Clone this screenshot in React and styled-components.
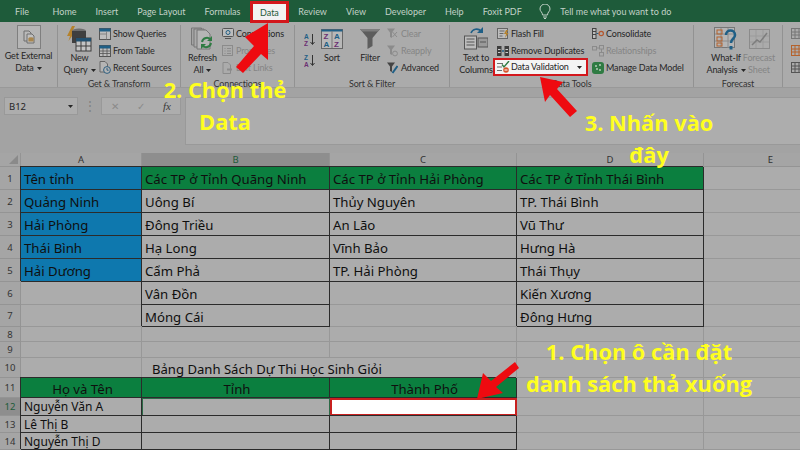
import styled, { createGlobalStyle } from 'styled-components';

const GlobalStyle = createGlobalStyle`
  html, body {
    margin: 0;
    padding: 0;
    background: #acacac;
  }
  * {
    box-sizing: border-box;
  }
`;

const tabs = ['File', 'Home', 'Insert', 'Page Layout', 'Formulas', 'Data', 'Review', 'View', 'Developer', 'Help', 'Foxit PDF'];

const blue = (t) => ({ t, kind: 'blue' });
const green = (t) => ({ t, kind: 'green' });
const box = (t) => ({ t, kind: 'box' });
const plain = (t) => ({ t, kind: 'plain' });

const rows = [
  { no: 1, size: 13.2, cells: [blue('Tên tỉnh'), green('Các TP ở Tỉnh Quãng Ninh'), green('Các TP ở Tỉnh Hải Phòng'), green('Các TP ở Tỉnh Thái Bình'), plain()] },
  { no: 2, size: 13.2, cells: [blue('Quảng Ninh'), box('Uông Bí'), box('Thủy Nguyên'), box('TP. Thái Bình'), plain()] },
  { no: 3, size: 13.2, cells: [blue('Hải Phòng'), box('Đông Triều'), box('An Lão'), box('Vũ Thư'), plain()] },
  { no: 4, size: 13.2, cells: [blue('Thái Bình'), box('Hạ Long'), box('Vĩnh Bảo'), box('Hưng Hà'), plain()] },
  { no: 5, size: 13.2, cells: [blue('Hải Dương'), box('Cẩm Phả'), box('TP. Hải Phòng'), box('Thái Thụy'), plain()] },
  { no: 6, size: 13.2, cells: [plain(), box('Vân Đồn'), plain(), box('Kiến Xương'), plain()] },
  { no: 7, size: 13.2, cells: [plain(), box('Móng Cái'), plain(), box('Đông Hưng'), plain()] },
  { no: 8, size: 11, cells: [plain(), plain(), plain(), plain(), plain()] },
  { no: 9, size: 11, cells: [plain(), plain(), plain(), plain(), plain()] },
  { no: 10, size: 13.1, cells: [plain(), { t: 'Bảng Danh Sách Dự Thi Học Sinh Giỏi', kind: 'title' }, plain(), plain(), plain()] },
  { no: 11, size: 13.2, cells: [{ t: 'Họ và Tên', kind: 'head' }, { t: 'Tỉnh', kind: 'head' }, { t: 'Thành Phố', kind: 'head' }, plain(), plain()] },
  { no: 12, size: 12, active: true, cells: [box('Nguyễn Văn A'), { kind: 'current' }, { kind: 'selected' }, plain(), plain()] },
  { no: 13, size: 12, cells: [box('Lê Thị B'), box(), box(), plain(), plain()] },
  { no: 14, size: 12, cells: [box('Nguyễn Thị D'), box(), box(), plain(), plain()] },
];

function Caret() {
  return <CaretMark viewBox="0 0 5 3"><path d="M0 0h5L2.5 3z" fill="currentColor" /></CaretMark>;
}

function GetDataIcon() {
  return (
    <Icon $w={12} $h={14} viewBox="0 0 12 14">
      <path d="M1 1h5l2 2v8H1z" fill="#b9b9b9" stroke="#6f6f6f" />
      <path d="M4 4h5l2 2v7H4z" fill="#c0c0c0" stroke="#6f6f6f" />
      <ellipse cx="8" cy="8.5" rx="2.6" ry="1.2" fill="#a8864e" />
      <rect x="5.4" y="8.5" width="5.2" height="3" fill="#a8864e" />
    </Icon>
  );
}

function NewQueryIcon() {
  return (
    <Icon $w={25} $h={26} viewBox="0 0 25 26">
      <path d="M5 0 0 10h3L1.5 15 8 6H5l3-6z" fill="#b5822c" />
      <ellipse cx="12" cy="5" rx="7" ry="2.5" fill="#6e6e6e" />
      <path d="M5 5v12h14V5" fill="#3f3f3f" />
      <rect x="9" y="12" width="15" height="13" fill="#c4c4c4" stroke="#3d3d3d" />
      <rect x="9" y="12" width="15" height="3.5" fill="#22506f" />
      <path d="M14 15v10M19 15v10M9 20h15" stroke="#3d3d3d" />
    </Icon>
  );
}

function TableIcon({ dense }) {
  return (
    <Icon $w={12} $h={12} viewBox="0 0 12 12">
      <rect x=".5" y=".5" width="11" height="11" fill="#bdbdbd" stroke="#555" />
      <rect x=".5" y=".5" width="11" height="3" fill="#1f5f86" />
      {dense
        ? <path d="M4 3v8M8 3v8M1 6h10M1 8.5h10" stroke="#555" strokeWidth=".8" />
        : <path d="M7.5 3.5v8M1 6h6.5" stroke="#777" strokeWidth=".8" />}
    </Icon>
  );
}

function RecentIcon() {
  return (
    <Icon $w={12} $h={13} viewBox="0 0 12 13">
      <path d="M1 .5h5l2.5 2.5v8H1z" fill="#b5b5b5" stroke="#666" />
      <circle cx="8" cy="9" r="3.4" fill="#b5b5b5" stroke="#2e5f80" />
      <path d="M8 7v2.2h1.6" stroke="#2e5f80" fill="none" />
    </Icon>
  );
}

function RefreshIcon() {
  return (
    <Icon $w={23} $h={24} viewBox="0 0 23 24">
      <path d="M0.5 1h10v17h-10z" fill="#a4a4a4" stroke="#777" />
      <path d="M3 2h10v18H3z" fill="#ababab" stroke="#777" />
      <path d="M6 3h9l4 4v15H6z" fill="#b5b5b5" stroke="#777" />
      <path d="M11 15a5 5 0 0 1 9-2M20 16a5 5 0 0 1-9 2" fill="none" stroke="#2f7b43" strokeWidth="2" />
      <path d="M21 9v5h-5zM10 22v-5h5z" fill="#2f7b43" />
    </Icon>
  );
}

function ConnectionsIcon() {
  return (
    <Icon $w={12} $h={11} viewBox="0 0 12 11">
      <rect x=".5" y=".5" width="11" height="8" rx="1" fill="#bcbcbc" stroke="#555" />
      <circle cx="6" cy="4.5" r="2" fill="none" stroke="#1f5f86" />
      <path d="M3 10.5h6" stroke="#555" />
    </Icon>
  );
}

function PropertiesIcon() {
  return (
    <Icon $w={11} $h={11} viewBox="0 0 11 11">
      <rect x=".5" y=".5" width="10" height="10" fill="none" stroke="#8b8b8b" />
      <path d="M2.5 3.5h1M5 3.5h4M2.5 6h1M5 6h4M2.5 8.5h1M5 8.5h4" stroke="#8b8b8b" />
    </Icon>
  );
}

function EditLinksIcon() {
  return (
    <Icon $w={11} $h={12} viewBox="0 0 11 12">
      <path d="M1 .5h5l2.5 2.5v8.5H1z" fill="none" stroke="#8b8b8b" />
      <path d="M5 7.5h5" stroke="#8b8b8b" strokeWidth="2" />
    </Icon>
  );
}

function SortSmallIcon({ top, bottom }) {
  return (
    <Icon $w={11} $h={13} viewBox="0 0 11 13">
      <SortLetter x="0" y="6" fill="#1f5f86">{top}</SortLetter>
      <SortLetter x="0" y="12.5" fill="#6b2f72">{bottom}</SortLetter>
      <path d="M8.5 1v10M6.5 9l2 2.5 2-2.5" fill="none" stroke="#333" />
    </Icon>
  );
}

function SortIcon() {
  return (
    <Icon $w={22} $h={20} viewBox="0 0 22 20">
      <rect x=".5" y=".5" width="21" height="19" fill="#b8b8b8" stroke="#666" />
      <rect x=".5" y=".5" width="21" height="2" fill="#1f5f86" />
      <path d="M11 2v17" stroke="#777" />
      <BigLetter x="2.5" y="10" fill="#6b2f72">Z</BigLetter>
      <BigLetter x="2.5" y="18" fill="#1f5f86">A</BigLetter>
      <BigLetter x="13" y="10" fill="#1f5f86">A</BigLetter>
      <BigLetter x="13" y="18" fill="#6b2f72">Z</BigLetter>
    </Icon>
  );
}

function FilterIcon() {
  return (
    <Icon $w={20} $h={20} viewBox="0 0 20 20">
      <path d="M0 0h20L12.5 9v8l-5 3V9z" fill="#5d5d5d" />
      <path d="M0 0h20l-2 2.4H2z" fill="#7d7d7d" />
    </Icon>
  );
}

function SmallFunnel({ mark, color }) {
  return (
    <Icon $w={11} $h={12} viewBox="0 0 11 12">
      <path d="M0 .5h8L5 4.5V10L3 9V4.5z" fill={color} />
      {mark === 'x' && <path d="M5.5 4l4.5 5M10 4 5.5 9" stroke={color} />}
      {mark === 'r' && <circle cx="8" cy="8.5" r="2.4" fill="none" stroke={color} />}
      {mark === 'a' && <path d="M10.5 4 5.5 11" stroke="#1f5f86" strokeWidth="2" />}
    </Icon>
  );
}

function TextColumnsIcon() {
  return (
    <Icon $w={24} $h={23} viewBox="0 0 24 23">
      <path d="M7 6a6 6 0 0 1 10-2" fill="none" stroke="#1f5f86" strokeWidth="1.6" />
      <path d="M19 0v6h-6z" fill="#1f5f86" />
      <rect x=".5" y="9" width="12" height="13" fill="#bdbdbd" stroke="#555" />
      <path d="M2.5 12h8M2.5 15h8M2.5 18h8" stroke="#555" />
      <rect x="14" y="11" width="10" height="9" fill="#9a9a9a" stroke="#555" />
      <path d="M16 15h6" stroke="#555" />
    </Icon>
  );
}

function FlashFillIcon() {
  return (
    <Icon $w={12} $h={11} viewBox="0 0 12 11">
      <rect x=".5" y=".5" width="10" height="10" fill="#bdbdbd" stroke="#666" />
      <path d="M2.5 3h5M2.5 5.5h4M2.5 8h3" stroke="#666" />
      <path d="M9 2 7 6h2L8 10l3.5-5H9.5L11 2z" fill="#b5822c" />
    </Icon>
  );
}

function RemoveDupIcon() {
  return (
    <Icon $w={12} $h={12} viewBox="0 0 12 12">
      <rect x="0" y="1" width="4.5" height="10" fill="#3d3d3d" />
      <rect x="7.5" y="1" width="4.5" height="10" fill="#3d3d3d" />
      <path d="M1 4.5h2.5M1 7.5h2.5M8.5 4.5H11M8.5 7.5H11" stroke="#ccc" />
      <path d="M5 6h2" stroke="#1f5f86" strokeWidth="1.4" />
    </Icon>
  );
}

function ValidationIcon() {
  return (
    <Icon $w={13} $h={12} viewBox="0 0 13 12">
      <path d="M0 2.5h6M0 6h5M0 9.5h5" stroke="#6f6f6f" strokeWidth="1.2" />
      <path d="M5 3.5 7 6l5-6" fill="none" stroke="#2f7b43" strokeWidth="1.4" />
      <circle cx="9" cy="9" r="2.8" fill="#d6542c" />
      <path d="M7.5 9h3" stroke="#fff" />
    </Icon>
  );
}

function ConsolidateIcon() {
  return (
    <Icon $w={12} $h={11} viewBox="0 0 12 11">
      <rect x=".5" y=".5" width="3.5" height="10" fill="#bdbdbd" stroke="#444" />
      <path d="M1 3.5h3M1 6.5h3" stroke="#444" />
      <path d="M4.5 5.5h2" stroke="#1f5f86" />
      <circle cx="9.2" cy="5.5" r="2.2" fill="none" stroke="#b5562c" strokeWidth="1.2" />
    </Icon>
  );
}

function RelationshipsIcon() {
  return (
    <Icon $w={12} $h={12} viewBox="0 0 12 12">
      <rect x=".5" y="1.5" width="4" height="3.5" fill="none" stroke="#8b8b8b" />
      <rect x="7.5" y=".5" width="4" height="3.5" fill="none" stroke="#8b8b8b" />
      <rect x="7.5" y="7.5" width="4" height="3.5" fill="none" stroke="#8b8b8b" />
      <path d="M4.5 3h3M9.5 4v3.5" stroke="#8b8b8b" />
    </Icon>
  );
}

function ModelIcon() {
  return (
    <Icon $w={12} $h={12} viewBox="0 0 12 12">
      <rect width="12" height="12" rx="3" fill="#2f7b43" />
      <path d="M3 4h2M7 3h2M4 7h2M7 8h2" stroke="#b7cdb9" strokeWidth="1.4" />
    </Icon>
  );
}

function WhatIfIcon() {
  return (
    <Icon $w={24} $h={24} viewBox="0 0 24 24">
      <rect x=".5" y=".5" width="20" height="20" fill="#b5b5b5" stroke="#777" />
      <path d="M7 1v20M14 1v20M1 7h20M1 14h20" stroke="#8c8c8c" />
      <rect x="3" y="3" width="5" height="4" fill="none" stroke="#b5622c" />
      <rect x="3" y="10" width="5" height="4" fill="none" stroke="#b5622c" />
      <rect x="3" y="16" width="5" height="3" fill="none" stroke="#b5622c" />
      <path d="M12 8c0-6 9-6 9 0 0 4-4 3.5-4 8" fill="none" stroke="#1f5f86" strokeWidth="2.6" />
      <rect x="15.5" y="19" width="3" height="3.5" fill="#1f5f86" />
    </Icon>
  );
}

function ForecastIcon() {
  return (
    <Icon $w={21} $h={20} viewBox="0 0 21 20">
      <rect x=".5" y=".5" width="20" height="19" fill="none" stroke="#8b8b8b" />
      <path d="M1 7h19M1 13h19M7 1v18M14 1v18" stroke="#9b9b9b" />
      <path d="M3 16l5-5 3 2 7-9" fill="none" stroke="#7d7d7d" strokeWidth="1.5" />
    </Icon>
  );
}

function OutlineIcon({ color }) {
  return (
    <Icon $w={12} $h={11} viewBox="0 0 12 11">
      <rect x=".5" y=".5" width="11" height="10" fill="none" stroke={color} />
      <path d="M4 1v9M8 1v9M1 4h10M1 7h10" stroke={color} />
    </Icon>
  );
}

function SmallItem({ icon, label, disabled }) {
  return (
    <Item $disabled={disabled}>
      <ItemIcon>{icon}</ItemIcon>
      {label}
    </Item>
  );
}

function LargeButton({ icon, lines, caret, disabled, width, shift }) {
  return (
    <Large $width={width} $shift={shift} $disabled={disabled}>
      <LargeIcon>{icon}</LargeIcon>
      <LargeLabel>
        {lines.map((line, i) => (
          <div key={line}>{line}{caret && i === lines.length - 1 && <Caret />}</div>
        ))}
      </LargeLabel>
    </Large>
  );
}

function Sheet() {
  return (
    <Grid>
      <Corner><CornerMark /></Corner>
      {['A', 'B', 'C', 'D', 'E'].map((c) => (
        <ColHead key={c} $active={c === 'B'}>{c}</ColHead>
      ))}
      {rows.map((row) => [
        <RowHead key={`h${row.no}`} $active={row.active}>{row.no}</RowHead>,
        ...row.cells.map((cell, i) => (
          <Cell key={`${row.no}-${i}`} $kind={cell.kind} $size={row.size}>{cell.t}</Cell>
        )),
      ])}
    </Grid>
  );
}

export default function App() {
  return (
    <Page>
      <GlobalStyle />
      <TabBar>
        {tabs.map((tab) => (
          <Tab key={tab} $active={tab === 'Data'} $wide={tab === 'File'}>{tab}</Tab>
        ))}
        <Bulb viewBox="0 0 12 15">
          <path d="M3.5 11C3.5 8 1 7.5 1 5a5 5 0 0 1 10 0c0 2.5-2.5 3-2.5 6z" fill="none" stroke="#c3d2c8" />
          <path d="M4 13h4M5 14.5h2" stroke="#c3d2c8" />
        </Bulb>
        <TellMe>Tell me what you want to do</TellMe>
      </TabBar>

      <Ribbon>
        <Group $width={58}>
          <Body>
            <ExternalButton>
              <ExternalIcon><GetDataIcon /></ExternalIcon>
              <LargeLabel>
                <div>Get External</div>
                <div>Data<Caret /></div>
              </LargeLabel>
            </ExternalButton>
          </Body>
        </Group>

        <Group $width={123}>
          <Body $pad={4}>
            <LargeButton width={35} icon={<NewQueryIcon />} lines={['New', 'Query']} caret />
            <SmallList>
              <SmallItem icon={<TableIcon />} label="Show Queries" />
              <SmallItem icon={<TableIcon dense />} label="From Table" />
              <SmallItem icon={<RecentIcon />} label="Recent Sources" />
            </SmallList>
          </Body>
          <GroupLabel>Get &amp; Transform</GroupLabel>
        </Group>

        <Group $width={114}>
          <Body $pad={4}>
            <LargeButton width={35} icon={<RefreshIcon />} lines={['Refresh', 'All']} caret />
            <SmallList>
              <SmallItem icon={<ConnectionsIcon />} label="Connections" />
              <SmallItem icon={<PropertiesIcon />} label="Properties" disabled />
              <SmallItem icon={<EditLinksIcon />} label="Edit Links" disabled />
            </SmallList>
          </Body>
          <GroupLabel>Connections</GroupLabel>
        </Group>

        <Group $width={155}>
          <Body $pad={9}>
            <SortColumn>
              <SortSmallIcon top="A" bottom="Z" />
              <SortSmallIcon top="Z" bottom="A" />
            </SortColumn>
            <LargeButton width={30} icon={<SortIcon />} lines={['Sort']} />
            <LargeButton width={30} shift={6} icon={<FilterIcon />} lines={['Filter']} />
            <SmallList>
              <SmallItem icon={<SmallFunnel mark="x" color="#8b8b8b" />} label="Clear" disabled />
              <SmallItem icon={<SmallFunnel mark="r" color="#8b8b8b" />} label="Reapply" disabled />
              <SmallItem icon={<SmallFunnel mark="a" color="#444" />} label="Advanced" />
            </SmallList>
          </Body>
          <GroupLabel>Sort &amp; Filter</GroupLabel>
        </Group>

        <Group $width={244}>
          <Body $pad={7}>
            <LargeButton width={38} icon={<TextColumnsIcon />} lines={['Text to', 'Columns']} />
            <SmallList $width={93}>
              <SmallItem icon={<FlashFillIcon />} label="Flash Fill" />
              <SmallItem icon={<RemoveDupIcon />} label="Remove Duplicates" />
              <Highlighted>
                <ItemIcon><ValidationIcon /></ItemIcon>
                Data Validation
                <HighlightCaret><Caret /></HighlightCaret>
              </Highlighted>
            </SmallList>
            <SmallList>
              <SmallItem icon={<ConsolidateIcon />} label="Consolidate" />
              <SmallItem icon={<RelationshipsIcon />} label="Relationships" disabled />
              <SmallItem icon={<ModelIcon />} label="Manage Data Model" />
            </SmallList>
          </Body>
          <GroupLabel>Data Tools</GroupLabel>
        </Group>

        <Group $width={89}>
          <Body $pad={13}>
            <LargeButton width={38} icon={<WhatIfIcon />} lines={['What-If', 'Analysis']} caret />
            <LargeButton width={24} icon={<ForecastIcon />} lines={['Forecast', 'Sheet']} disabled />
          </Body>
          <GroupLabel>Forecast</GroupLabel>
        </Group>

        <OutlineGroup>
          <OutlineIcon color="#777" />
          <OutlineIcon color="#b5622c" />
          <OutlineIcon color="#555" />
        </OutlineGroup>
      </Ribbon>

      <FormulaBar>
        <NameBox>B12<NameCaret><Caret /></NameCaret></NameBox>
        <Dots>⋮</Dots>
        <FxBox>
          <FxMark>✕</FxMark>
          <FxMark>✓</FxMark>
          <FxItalic>fx</FxItalic>
        </FxBox>
        <FormulaInput />
      </FormulaBar>

      <Sheet />

      <Callout $left={100} $top={74} $width={250}>2. Chọn thẻ<br />Data</Callout>
      <Callout $left={524} $top={107} $width={250}>3. Nhấn vào<br />đây</Callout>
      <Callout $left={489} $top={336} $width={300}>1. Chọn ô cần đặt<br />danh sách thả xuống</Callout>

      <ArrowLayer viewBox="0 0 800 450">
        <polygon points="268,23 245,37 254,46 236,67 243,73 261,54 268,60" />
        <polygon points="540,77 563,82 557,89 577,111 570,117 550,95 545,102" />
        <polygon points="477,399 483,373 491,381 515,362 519,368 496,387 503,393" />
      </ArrowLayer>
    </Page>
  );
}

const Page = styled.div`
  position: relative;
  width: 800px;
  height: 450px;
  overflow: hidden;
  display: flex;
  flex-direction: column;
  background: #acacac;
  font-family: 'Noto Sans', 'Open Sans', sans-serif;
  color: #262626;
`;

const TabBar = styled.div`
  height: 22px;
  flex: none;
  display: flex;
  align-items: stretch;
  padding-left: 5px;
  background: #1e5b3a;
  color: #c3d2c8;
  font-family: 'Lato', sans-serif;
  font-size: 9px;
`;

const Tab = styled.div`
  display: flex;
  align-items: center;
  padding: 0 ${(props) => (props.$wide ? 14 : 9.5)}px 0 ${(props) => (props.$wide ? 10 : 9.5)}px;
  ${(props) => props.$active && `
    position: relative;
    height: 22px;
    margin-top: 1px;
    padding: 0 7px;
    border: 3px solid #d3171c;
    background: #f2f2f2;
    color: #1e5b3a;
  `}
`;

const Bulb = styled.svg`
  width: 12px;
  height: 15px;
  margin: 4px 9px 0 8px;
`;

const TellMe = styled.div`
  display: flex;
  align-items: center;
`;

const Ribbon = styled.div`
  height: 66px;
  flex: none;
  display: flex;
  background: #ababab;
  border-bottom: 1px solid #999;
  font-family: 'Lato', sans-serif;
  font-size: 9px;
  letter-spacing: -0.15px;
  line-height: 12px;
`;

const Group = styled.div`
  width: ${(props) => props.$width}px;
  flex: none;
  display: flex;
  flex-direction: column;
  border-right: 1px solid #929292;
  margin-top: 3px;
`;

const Body = styled.div`
  flex: 1;
  display: flex;
  align-items: flex-start;
  padding-left: ${(props) => props.$pad || 0}px;
  gap: 2px;
`;

const GroupLabel = styled.div`
  height: 11px;
  margin-bottom: -2px;
  text-align: center;
  line-height: 11px;
  color: #333;
`;

const ExternalButton = styled.div`
  width: 58px;
  display: flex;
  flex-direction: column;
  align-items: center;
`;

const ExternalIcon = styled.div`
  width: 24px;
  height: 24px;
  margin-bottom: 1px;
  display: flex;
  align-items: center;
  justify-content: center;
  border: 1px solid #7f7f7f;
  background: #b6b6b6;
`;

const Large = styled.div`
  width: ${(props) => props.$width}px;
  flex: none;
  margin-left: ${(props) => props.$shift || 0}px;
  display: flex;
  flex-direction: column;
  align-items: center;
  color: ${(props) => (props.$disabled ? '#858585' : 'inherit')};
`;

const LargeIcon = styled.div`
  height: 27px;
  display: flex;
  align-items: center;
  justify-content: center;
`;

const LargeLabel = styled.div`
  white-space: nowrap;
  text-align: center;
`;

const CaretMark = styled.svg`
  width: 5px;
  height: 3px;
  margin-left: 3px;
  vertical-align: middle;
`;

const Icon = styled.svg`
  width: ${(props) => props.$w}px;
  height: ${(props) => props.$h}px;
  flex: none;
  display: block;
`;

const SmallList = styled.div`
  display: flex;
  flex-direction: column;
  ${(props) => props.$width && `width: ${props.$width}px;`}
`;

const Item = styled.div`
  height: 17px;
  display: flex;
  align-items: center;
  white-space: nowrap;
  color: ${(props) => (props.$disabled ? '#858585' : 'inherit')};
`;

const ItemIcon = styled.div`
  width: 14px;
  flex: none;
`;

const Highlighted = styled.div`
  position: relative;
  width: 95px;
  height: 18px;
  margin: -1px 0 0 -4px;
  padding-left: 2px;
  display: flex;
  align-items: center;
  white-space: nowrap;
  background: #f4f4f4;
  border: 2.5px solid #d3171c;
`;

const HighlightCaret = styled.span`
  margin-left: auto;
  padding-right: 4px;
`;

const SortColumn = styled.div`
  display: flex;
  flex-direction: column;
  gap: 8px;
  padding-top: 8px;
`;

const SortLetter = styled.text`
  font-size: 6.5px;
  font-weight: 700;
  font-family: 'Liberation Sans', sans-serif;
`;

const BigLetter = styled.text`
  font-size: 8px;
  font-weight: 700;
  font-family: 'Liberation Sans', sans-serif;
`;

const OutlineGroup = styled.div`
  display: flex;
  flex-direction: column;
  gap: 6px;
  padding: 6px 0 0 8px;
`;

const FormulaBar = styled.div`
  height: 65px;
  flex: none;
  display: flex;
  align-items: flex-start;
  padding: 9px 0 0 4px;
  background: #a3a3a3;
`;

const NameBox = styled.div`
  width: 74px;
  height: 18px;
  flex: none;
  display: flex;
  align-items: center;
  padding: 0 4px;
  background: #adadad;
  border: 1px solid #999;
  font-size: 9.5px;
`;

const NameCaret = styled.span`
  margin-left: auto;
`;

const Dots = styled.div`
  width: 23px;
  flex: none;
  text-align: center;
  color: #808080;
  font-size: 12px;
  line-height: 18px;
`;

const FxBox = styled.div`
  width: 80px;
  height: 18px;
  flex: none;
  display: flex;
  align-items: center;
  justify-content: space-around;
  background: #adadad;
  border: 1px solid #999;
`;

const FxMark = styled.span`
  color: #8a8a8a;
  font-size: 10px;
`;

const FxItalic = styled.span`
  color: #3a3a3a;
  font-family: 'Liberation Serif', serif;
  font-style: italic;
  font-size: 11px;
`;

const FormulaInput = styled.div`
  flex: 1;
  height: 48px;
  margin-left: 4px;
  background: #adadad;
  border: 1px solid #999;
  border-right: 0;
`;

const Grid = styled.div`
  flex: none;
  display: grid;
  grid-template-columns: 21px 121px 188px 187px 187px 134px;
  grid-template-rows: 14px repeat(6, 23px) 22px 15px 16px 20px 20px 18px 17px 17px;
`;

const Corner = styled.div`
  position: relative;
  background: #a5a5a5;
  border-right: 1px solid #949494;
  border-bottom: 1px solid #949494;
`;

const CornerMark = styled.div`
  position: absolute;
  right: 2px;
  bottom: 2px;
  border-left: 9px solid transparent;
  border-bottom: 9px solid #8a8a8a;
`;

const ColHead = styled.div`
  display: flex;
  align-items: center;
  justify-content: center;
  font-size: 9.5px;
  background: ${(props) => (props.$active ? '#8e8e8e' : '#a5a5a5')};
  color: ${(props) => (props.$active ? '#1e5b3a' : '#333')};
  border-right: 1px solid #949494;
  border-bottom: 1px solid ${(props) => (props.$active ? '#1e5b3a' : '#949494')};
`;

const RowHead = styled.div`
  display: flex;
  align-items: center;
  justify-content: center;
  font-size: 9.5px;
  background: ${(props) => (props.$active ? '#8e8e8e' : '#a5a5a5')};
  color: ${(props) => (props.$active ? '#1e5b3a' : '#333')};
  border-right: 1px solid #949494;
  border-bottom: 1px solid #949494;
`;

const fills = { blue: '#0e78ae', green: '#0b7f3f', head: '#0b7f3f', selected: '#ffffff' };
const strong = ['blue', 'green', 'head', 'box'];

const Cell = styled.div`
  position: relative;
  min-width: 0;
  display: flex;
  align-items: center;
  padding: ${(props) => (props.$size > 13 ? 2 : 0)}px 0 0 3px;
  white-space: nowrap;
  font-size: ${(props) => props.$size}px;
  color: #0f0f0f;
  background: ${(props) => fills[props.$kind] || 'transparent'};
  border-right: 1px solid ${(props) => (strong.includes(props.$kind) ? '#2b2b2b' : '#989898')};
  border-bottom: 1px solid ${(props) => (strong.includes(props.$kind) ? '#2b2b2b' : '#989898')};
  ${(props) => strong.includes(props.$kind) && 'box-shadow: -1px -1px 0 0 #2b2b2b;'}
  ${(props) => props.$kind === 'head' && 'justify-content: center;'}
  ${(props) => props.$kind === 'title' && `
    padding-left: 10px;
    border-right-color: transparent;
  `}
  ${(props) => props.$kind === 'current' && 'border: 1px solid #2c6a47;'}
  ${(props) => props.$kind === 'selected' && 'border: 2.5px solid #c8201f;'}
`;

const Callout = styled.div`
  position: absolute;
  left: ${(props) => props.$left}px;
  top: ${(props) => props.$top}px;
  width: ${(props) => props.$width}px;
  text-align: center;
  color: #ffff1e;
  font-family: 'Open Sans', sans-serif;
  font-weight: 700;
  font-size: 21.8px;
  line-height: 32px;
`;

const ArrowLayer = styled.svg`
  position: absolute;
  left: 0;
  top: 0;
  width: 800px;
  height: 450px;
  fill: #ee0a10;
  pointer-events: none;
`;
